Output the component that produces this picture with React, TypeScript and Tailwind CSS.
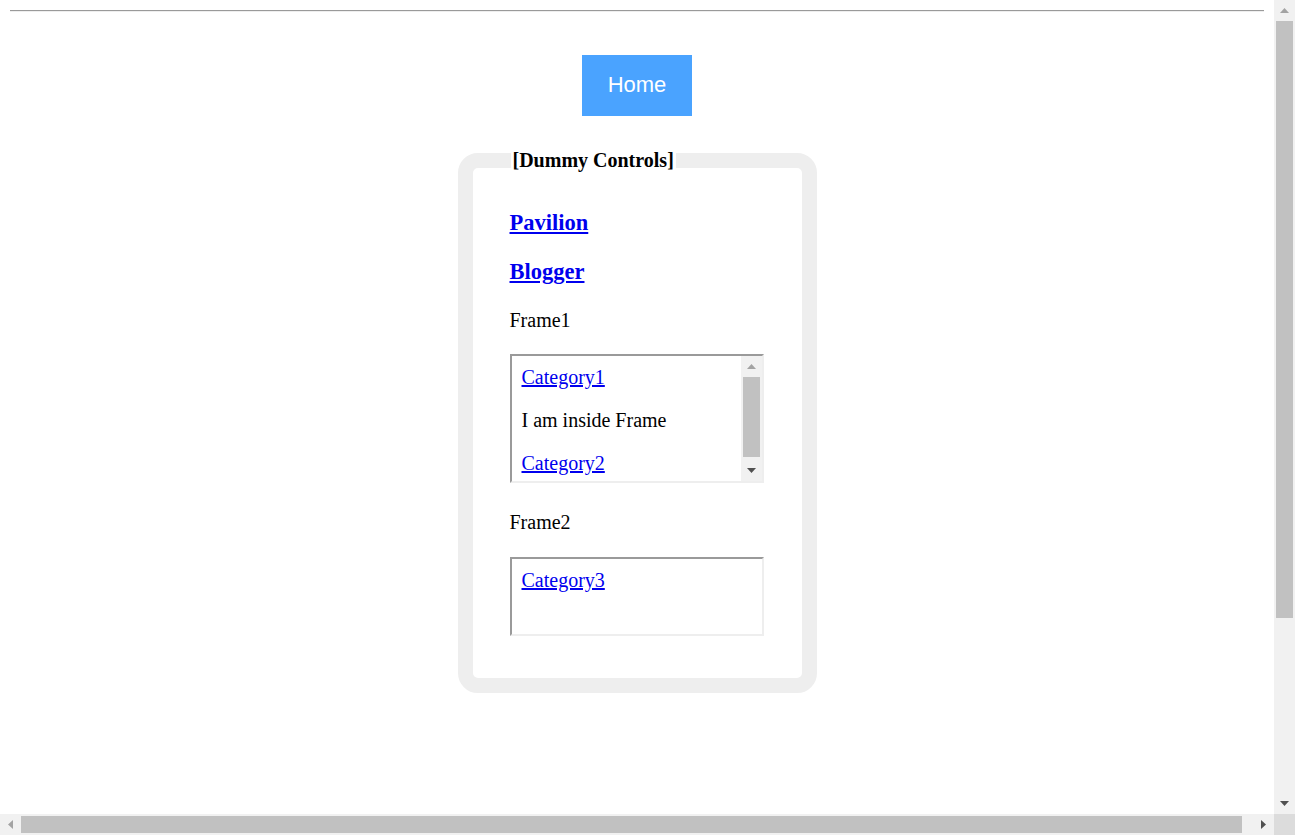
import React from 'react';

type Dir = 'up' | 'down' | 'left' | 'right';

function Arrow({dir, active}: {dir: Dir; active: boolean}) {
    const fill = active ? '#505050' : '#a3a3a3';
    const vertical = dir === 'up' || dir === 'down';
    const d = {
        up: 'M4.5 0 L9 5 L0 5 Z',
        down: 'M0 0 L9 0 L4.5 5 Z',
        left: 'M0 4.5 L5 0 L5 9 Z',
        right: 'M0 0 L5 4.5 L0 9 Z',
    }[dir];
    return (
        <svg width={vertical ? 9 : 5} height={vertical ? 5 : 9} viewBox={vertical ? '0 0 9 5' : '0 0 5 9'}>
            <path d={d} fill={fill} />
        </svg>
    );
}

function VerticalBar({thumb}: {thumb: string}) {
    return (
        <div className="flex w-[21px] shrink-0 flex-col bg-[#f1f1f1]">
            <div className="flex h-[21px] shrink-0 items-center justify-center">
                <Arrow dir="up" active={false} />
            </div>
            <div className={`mx-[2px] shrink-0 bg-[#c1c1c1] ${thumb}`} />
            <div className="flex-1" />
            <div className="flex h-[21px] shrink-0 items-center justify-center">
                <Arrow dir="down" active={true} />
            </div>
        </div>
    );
}

function FrameBox({height, children, scroll}: {height: string; children: React.ReactNode; scroll?: boolean}) {
    return (
        <div className={`flex w-[254px] border-2 border-t-[#9a9a9a] border-l-[#9a9a9a] border-r-[#eeeeee] border-b-[#eeeeee] ${height}`}>
            <div className="flex min-w-0 flex-1 flex-col gap-[20px] overflow-hidden pl-[10px] pt-[10px] text-[20px] leading-[23px]">
                {children}
            </div>
            {scroll && <VerticalBar thumb="h-[80px]" />}
        </div>
    );
}

function Link({children}: {children: React.ReactNode}) {
    return (
        <a href="#" className="block w-fit text-[#0000ee] underline">
            {children}
        </a>
    );
}

export default function App() {
    return (
        <div className="flex h-[835px] w-[1295px] flex-col overflow-hidden bg-white font-['Liberation_Serif',serif] text-black">
            <div className="flex min-h-0 flex-1">
                <main className="flex min-w-0 flex-1 flex-col overflow-hidden pt-[10px]">
                    <hr className="mx-[10px] h-[2px] border-0 border-t border-b border-t-[#9a9a9a] border-b-[#eeeeee]" />

                    <a
                        href="#"
                        className="mt-[43px] flex h-[61px] w-[110px] items-center justify-center self-center bg-[#4aa3ff] pb-[2px] font-['Liberation_Sans',Arial,sans-serif] text-[22px] text-white"
                    >
                        Home
                    </a>

                    <fieldset className="mx-auto mt-[33px] w-[359px] rounded-[20px] border-[15px] border-[#eeeeee] pb-[42px] pl-[37px] pr-[38px] pt-[38px]">
                        <legend className="ml-[1px] px-[2px] text-[20px] font-bold leading-[23px]">[Dummy Controls]</legend>

                        <h3 className="text-[22.5px] font-bold leading-[26px]">
                            <Link>Pavilion</Link>
                        </h3>
                        <h3 className="mt-[23px] text-[22.5px] font-bold leading-[26px]">
                            <Link>Blogger</Link>
                        </h3>

                        <p className="mt-[24px] text-[20px] leading-[23px]">Frame1</p>
                        <div className="mt-[22px]">
                            <FrameBox height="h-[129px]" scroll>
                                <Link>Category1</Link>
                                <p>I am inside Frame</p>
                                <Link>Category2</Link>
                            </FrameBox>
                        </div>

                        <p className="mt-[28px] text-[20px] leading-[23px]">Frame2</p>
                        <div className="mt-[23px]">
                            <FrameBox height="h-[79px]">
                                <Link>Category3</Link>
                            </FrameBox>
                        </div>
                    </fieldset>
                </main>

                <VerticalBar thumb="h-[597px]" />
            </div>

            <div className="flex h-[21px] shrink-0">
                <div className="flex flex-1 bg-[#f1f1f1]">
                    <div className="flex w-[21px] shrink-0 items-center justify-center">
                        <Arrow dir="left" active={false} />
                    </div>
                    <div className="my-[2px] w-[1221px] bg-[#c1c1c1]" />
                    <div className="flex-1" />
                    <div className="flex w-[21px] shrink-0 items-center justify-center">
                        <Arrow dir="right" active={true} />
                    </div>
                </div>
                <div className="w-[21px] bg-[#dcdcdc]" />
            </div>
        </div>
    );
}
